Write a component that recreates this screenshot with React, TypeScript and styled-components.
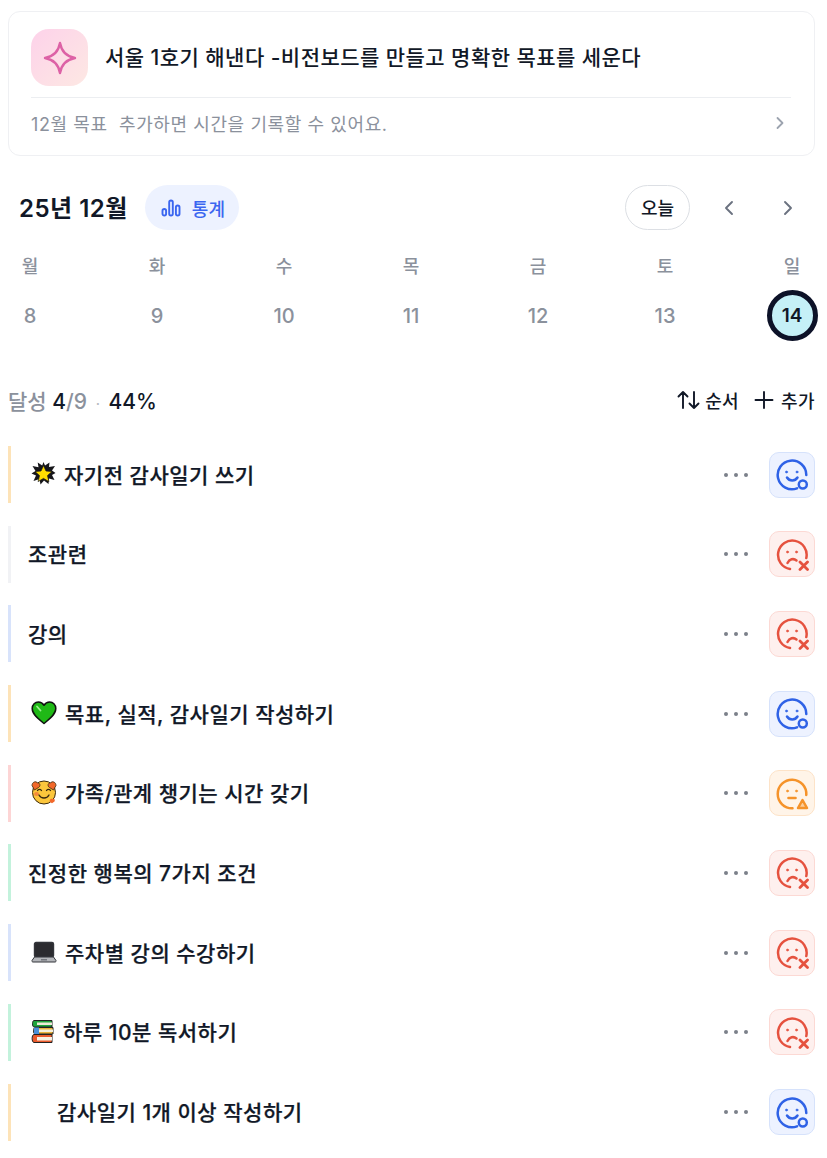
import React from 'react';
import styled, { createGlobalStyle } from 'styled-components';

type Status = 'good' | 'bad' | 'warn';

type Goal = {
  title: string;
  bar: string;
  status: Status;
  emoji?: React.ReactNode;
  indent?: boolean;
};

const GlobalStyle = createGlobalStyle`
  * {
    box-sizing: border-box;
  }
  body {
    margin: 0;
    background: #fff;
    font-family: Inter, "Noto Sans CJK KR", sans-serif;
    color: #111827;
  }
`;

function CollisionEmoji() {
  return (
    <svg width="25" height="25" viewBox="0 0 25 25">
      <path d="M12.500 1l1.500 3.500L18.500 1.500l-.5 4.500 6-1-3 4.500 3.500 2.500-3.500 2 2.500 5-5.500-1.500-.5 5.500-4.500-3.500-3.500 4-1-5.500-6 2 2.500-5.500L.5 12.500l4-2.500-3-5 6 1.200-.8-4.700 4.500 3z" fill="#16161a" />
      <path d="M12.500 4.500l2.500 5.500 6 .6-4.500 4 1.400 6-5.400-3.200-5.400 3.200 1.400-6-4.500-4 6-.6z" fill="#ffdd00" stroke="#16161a" strokeWidth="0.700" strokeLinejoin="round" />
    </svg>
  );
}

function HeartEmoji() {
  return (
    <svg width="26" height="24" viewBox="0 0 26 24">
      <path d="M13 22.500C8 18.500 1.200 13.500 1.200 7.500 1.200 3.500 4.200 1 7.300 1 9.800 1 11.800 2.300 13 4.300 14.200 2.300 16.200 1 18.700 1 21.800 1 24.800 3.500 24.800 7.500 24.800 13.500 18 18.500 13 22.500z" fill="#1fb916" stroke="#111" strokeWidth="1.500" strokeLinejoin="round" />
      <path d="M6 5.500l3.500 4" stroke="#9ef08f" strokeWidth="1.800" strokeLinecap="round" />
    </svg>
  );
}

function HeartsFaceEmoji() {
  return (
    <svg width="26" height="26" viewBox="0 0 26 26">
      <circle cx="13" cy="13.500" r="11.500" fill="#fbc63c" stroke="#3a2a10" strokeWidth="1" />
      <path d="M1 6.500c0-3.500 4-5 5.500-2.500 2.500-.5 3.500 3 1 4.500L3.500 11z" fill="#f2682a" stroke="#3a2a10" strokeWidth="0.800" />
      <path d="M25 6.500c0-3.500-4-5-5.500-2.500-2.500-.5-3.500 3-1 4.500l4 2.500z" fill="#f2682a" stroke="#3a2a10" strokeWidth="0.800" />
      <path d="M19 23c-1-2.500 1-4 2.500-3 1.500-1 3 .5 2 2.500l-2.500 1.800z" fill="#f2682a" />
      <ellipse cx="5.500" cy="15" rx="2.500" ry="2" fill="#f58a3c" />
      <path d="M6.500 11.500c1-1.500 3-1.500 4 0M15.500 11.500c1-1.500 3-1.500 4 0" fill="none" stroke="#3a2a10" strokeWidth="1.300" strokeLinecap="round" />
      <path d="M8 16c2 4 8 4 10 0" fill="none" stroke="#3a2a10" strokeWidth="1.300" strokeLinecap="round" />
    </svg>
  );
}

function LaptopEmoji() {
  return (
    <svg width="26" height="22" viewBox="0 0 26 22">
      <rect x="3.500" y="1.500" width="19" height="14.500" rx="1.500" fill="#2b2b2f" stroke="#33353a" strokeWidth="1.400" />
      <path d="M3.500 16h19l2.500 3.500c.3.800-.2 1.500-1 1.500H2c-.8 0-1.300-.7-1-1.500z" fill="#b4b6ba" stroke="#33353a" strokeWidth="1" />
      <rect x="10" y="18" width="6" height="1.500" fill="#74777d" />
    </svg>
  );
}

function BooksEmoji() {
  return (
    <svg width="24" height="25" viewBox="0 0 24 25">
      <path d="M3 1.500h18v6.500H3C1 8 1 1.500 3 1.500z" fill="#1fa53c" stroke="#222" strokeWidth="1" />
      <rect x="6" y="3.500" width="15" height="2.500" fill="#efe9d8" />
      <path d="M4 8.500h18v6.500H4c-2 0-2-6.500 0-6.500z" fill="#e8b23a" stroke="#222" strokeWidth="1" />
      <rect x="7" y="10.500" width="15" height="2.500" fill="#f6efdc" />
      <path d="M3 8.500h5v6.500H3z" fill="#4a90d9" />
      <path d="M3 15.500h18v8H3c-2.500 0-2.500-8 0-8z" fill="#ea5a2c" stroke="#222" strokeWidth="1" />
      <rect x="6" y="18" width="15" height="3.500" fill="#f7f1e3" />
    </svg>
  );
}

function StatusFace({ status }: { status: Status }) {
  return (
    <svg width="33" height="33" viewBox="0 0 33 33" fill="none" stroke="currentColor" strokeWidth="2.500" strokeLinecap="round" strokeLinejoin="round">
      {status === 'good' && <path d="M21 30.300A14.300 14.300 0 1 1 30.300 17" />}
      {status === 'bad' && <path d="M14 31A14.300 14.300 0 1 1 30.300 20" />}
      {status === 'warn' && <path d="M16.500 31.300A14.300 14.300 0 1 1 30.300 18" />}
      <circle cx={status === 'good' ? 10.500 : 11.500} cy="14" r="1.100" fill="currentColor" strokeWidth="0.500" />
      <circle cx={status === 'good' ? 21 : 20.500} cy="14" r="1.100" fill="currentColor" strokeWidth="0.500" />
      {status === 'good' && (
        <>
          <path d="M11 19.500c2.500 4 8 4 10.500 0" />
          <circle cx="26.800" cy="26.500" r="4" />
        </>
      )}
      {status === 'bad' && (
        <>
          <path d="M11.500 25c2-4 6-5 9-2.500" />
          <path d="M24 24l7.500 7.500M31.500 24L24 31.500" strokeWidth="2.800" />
        </>
      )}
      {status === 'warn' && (
        <>
          <path d="M12.500 21h7" strokeWidth="2.600" />
          <path d="M26.500 23l4.500 8h-9z" strokeWidth="2.500" fill="currentColor" fillOpacity="0.400" />
        </>
      )}
    </svg>
  );
}

const days = [
  { label: '월', date: 8 },
  { label: '화', date: 9 },
  { label: '수', date: 10 },
  { label: '목', date: 11 },
  { label: '금', date: 12 },
  { label: '토', date: 13 },
  { label: '일', date: 14, today: true },
];

const goals: Goal[] = [
  { title: '자기전 감사일기 쓰기', bar: '#fde3b8', status: 'good', emoji: <CollisionEmoji /> },
  { title: '조관련', bar: '#f1f2f5', status: 'bad' },
  { title: '강의', bar: '#d8e3fb', status: 'bad' },
  { title: '목표, 실적, 감사일기 작성하기', bar: '#fde3b8', status: 'good', emoji: <HeartEmoji /> },
  { title: '가족/관계 챙기는 시간 갖기', bar: '#fdd5d5', status: 'warn', emoji: <HeartsFaceEmoji /> },
  { title: '진정한 행복의 7가지 조건', bar: '#c3f2dc', status: 'bad' },
  { title: '주차별 강의 수강하기', bar: '#d8e3fb', status: 'bad', emoji: <LaptopEmoji /> },
  { title: '하루 10분 독서하기', bar: '#c3f2dc', status: 'bad', emoji: <BooksEmoji /> },
  { title: '감사일기 1개 이상 작성하기', bar: '#fde3b8', status: 'good', indent: true },
];

function App() {
  return (
    <Page>
      <GlobalStyle />
      <GoalCard>
        <GoalTop>
          <SparkBox>
            <svg width="36" height="36" viewBox="0 0 36 36" fill="none">
              <path
                d="M18 3c1.500 8.500 6.500 13.500 15 15-8.500 1.500-13.500 6.500-15 15C16.500 24.500 11.500 19.500 3 18 11.500 16.500 16.500 11.500 18 3z"
                stroke="#dd62a6"
                strokeWidth="2.400"
                strokeLinejoin="round"
              />
            </svg>
          </SparkBox>
          <GoalTitle>서울 1호기 해낸다 -비전보드를 만들고 명확한 목표를 세운다</GoalTitle>
        </GoalTop>
        <GoalFooter>
          <GoalHint>12월 목표&nbsp; 추가하면 시간을 기록할 수 있어요.</GoalHint>
          <svg width="20" height="20" viewBox="0 0 20 20" fill="none" stroke="#9ca3af" strokeWidth="1.800" strokeLinecap="round" strokeLinejoin="round">
            <path d="M7.500 5l5 5-5 5" />
          </svg>
        </GoalFooter>
      </GoalCard>

      <CalendarHeader>
        <MonthGroup>
          <MonthTitle>25년 12월</MonthTitle>
          <StatsButton>
            <svg width="20" height="20" viewBox="0 0 20 20" fill="none" stroke="#3b66f0" strokeWidth="1.900">
              <rect x="1.500" y="11" width="3.600" height="6.500" rx="1.800" />
              <rect x="8.200" y="2.500" width="3.600" height="15" rx="1.800" />
              <rect x="14.900" y="7.500" width="3.600" height="10" rx="1.800" />
            </svg>
            통계
          </StatsButton>
        </MonthGroup>
        <NavGroup>
          <TodayButton>오늘</TodayButton>
          <NavButton>
            <svg width="22" height="22" viewBox="0 0 22 22" fill="none" stroke="#6b7280" strokeWidth="1.900" strokeLinecap="round" strokeLinejoin="round">
              <path d="M14 5l-6 6 6 6" />
            </svg>
          </NavButton>
          <NavButton>
            <svg width="22" height="22" viewBox="0 0 22 22" fill="none" stroke="#6b7280" strokeWidth="1.900" strokeLinecap="round" strokeLinejoin="round">
              <path d="M8 5l6 6-6 6" />
            </svg>
          </NavButton>
        </NavGroup>
      </CalendarHeader>

      <Week>
        {days.map((d) => (
          <DayColumn key={d.label}>
            <DayLabel>{d.label}</DayLabel>
            <DayDate $today={d.today}>{d.date}</DayDate>
          </DayColumn>
        ))}
      </Week>

      <SummaryRow>
        <Summary>
          <SummaryMuted>달성</SummaryMuted> 4<SummaryMuted>/9</SummaryMuted> <SummaryDot>·</SummaryDot> 44%
        </Summary>
        <Actions>
          <ActionButton>
            <svg width="23" height="22" viewBox="0 0 23 22" fill="none" stroke="#111827" strokeWidth="1.900" strokeLinecap="round" strokeLinejoin="round">
              <path d="M6 19V3M1.500 7.500L6 3l4.500 4.500M17 3v16M12.500 14.500L17 19l4.500-4.500" />
            </svg>
            순서
          </ActionButton>
          <ActionButton $gap={7}>
            <svg width="20" height="22" viewBox="0 0 20 22" fill="none" stroke="#111827" strokeWidth="1.900" strokeLinecap="round">
              <path d="M10 3v16M1.500 11h17" />
            </svg>
            추가
          </ActionButton>
        </Actions>
      </SummaryRow>

      <GoalList>
        {goals.map((g) => (
          <GoalRow key={g.title} $bar={g.bar}>
            <GoalLabel $indent={g.indent}>
              {g.emoji && <EmojiSlot>{g.emoji}</EmojiSlot>}
              {g.title}
            </GoalLabel>
            <MoreDots>
              <Dot />
              <Dot />
              <Dot />
            </MoreDots>
            <StatusBox $status={g.status}>
              <StatusFace status={g.status} />
            </StatusBox>
          </GoalRow>
        ))}
      </GoalList>
    </Page>
  );
}

const Page = styled.div`
  width: 827px;
  height: 1158px;
  padding: 11px 12px 0 8px;
  overflow: hidden;
  background: #fff;
`;

const GoalCard = styled.section`
  height: 145px;
  padding: 17px 22px 0;
  border: 1px solid #eff0f3;
  border-radius: 12px;
`;

const GoalTop = styled.div`
  display: flex;
  align-items: center;
  gap: 17px;
  height: 69px;
  margin-right: 1px;
  padding-bottom: 11px;
  border-bottom: 1px solid #eceef1;
`;

const SparkBox = styled.div`
  display: flex;
  align-items: center;
  justify-content: center;
  width: 57px;
  height: 57px;
  border-radius: 18px;
  background: linear-gradient(135deg, #fdd2ea, #fde8e3);
`;

const GoalTitle = styled.div`
  padding-bottom: 3px;
  font-size: 21px;
  font-weight: 500;
  letter-spacing: 0.45px;
  color: #111827;
`;

const GoalFooter = styled.div`
  display: flex;
  align-items: center;
  justify-content: space-between;
  height: 50px;
  padding-right: 2px;
`;

const GoalHint = styled.div`
  font-size: 18px;
  letter-spacing: 0.6px;
  color: #8b919c;
`;

const CalendarHeader = styled.div`
  display: flex;
  align-items: center;
  justify-content: space-between;
  height: 45px;
  margin-top: 29px;
  padding-left: 11px;
`;

const MonthGroup = styled.div`
  display: flex;
  align-items: center;
  gap: 17px;
`;

const MonthTitle = styled.h2`
  margin: 0;
  padding-bottom: 2px;
  font-size: 24px;
  font-weight: 600;
  letter-spacing: 0.5px;
  color: #111827;
`;

const StatsButton = styled.button`
  display: flex;
  align-items: center;
  gap: 11px;
  height: 45px;
  padding: 0 14px 0 16px;
  border: 0;
  border-radius: 23px;
  background: #edf2ff;
  color: #3b66f0;
  font: 500 18px Inter, "Noto Sans CJK KR", sans-serif;
`;

const NavGroup = styled.div`
  display: flex;
  align-items: center;
  padding-right: 4px;
`;

const TodayButton = styled.button`
  width: 65px;
  height: 45px;
  margin-right: 16px;
  padding: 0 0 2px;
  border: 1px solid #dcdfe4;
  border-radius: 23px;
  background: #fff;
  color: #111827;
  font: 500 18px Inter, "Noto Sans CJK KR", sans-serif;
`;

const NavButton = styled.button`
  display: flex;
  align-items: center;
  justify-content: center;
  width: 46px;
  height: 45px;
  padding: 0;
  border: 0;
  background: none;

  & + & {
    margin-left: 13px;
  }
`;

const Week = styled.div`
  display: flex;
  justify-content: space-between;
  margin: 25px 0 0 -1px;
`;

const DayColumn = styled.div`
  display: flex;
  flex-direction: column;
  align-items: center;
  width: 46px;
`;

const DayLabel = styled.div`
  height: 24px;
  font-size: 18px;
  line-height: 24px;
  font-weight: 500;
  color: #8b919c;
`;

const DayDate = styled.div<{ $today?: boolean }>`
  display: flex;
  align-items: center;
  justify-content: center;
  flex: none;
  width: 51px;
  height: 51px;
  margin-top: 11px;
  border-radius: 50%;
  font-size: ${(p) => (p.$today ? '19px' : '20px')};
  font-weight: ${(p) => (p.$today ? 600 : 500)};
  color: ${(p) => (p.$today ? '#111827' : '#8b919c')};
  background: ${(p) => (p.$today ? '#c5f0f7' : 'transparent')};
  border: ${(p) => (p.$today ? '5px solid #0d1228' : '0')};
`;

const SummaryRow = styled.div`
  display: flex;
  align-items: center;
  justify-content: space-between;
  height: 26px;
  margin-top: 46px;
`;

const Summary = styled.div`
  font-size: 21px;
  font-weight: 500;
  color: #111827;
`;

const SummaryMuted = styled.span`
  color: #8b919c;
`;

const SummaryDot = styled.span`
  color: #b5b9c1;
  font-size: 14px;
  padding: 0 3px;
`;

const Actions = styled.div`
  display: flex;
  align-items: center;
  gap: 15px;
`;

const ActionButton = styled.button<{ $gap?: number }>`
  display: flex;
  align-items: center;
  gap: ${(p) => p.$gap ?? 5}px;
  padding: 0;
  border: 0;
  background: none;
  color: #111827;
  font: 500 18px Inter, "Noto Sans CJK KR", sans-serif;
  letter-spacing: 0.4px;
`;

const GoalList = styled.div`
  display: flex;
  flex-direction: column;
  gap: 22.7px;
  margin-top: 33px;
`;

const GoalRow = styled.div<{ $bar: string }>`
  display: flex;
  align-items: center;
  height: 57px;
  padding-left: 17px;
  border-left: 3px solid ${(p) => p.$bar};
`;

const GoalLabel = styled.div<{ $indent?: boolean }>`
  display: flex;
  align-items: center;
  flex: 1;
  gap: 8px;
  padding-bottom: 2px;
  padding-left: ${(p) => (p.$indent ? '29px' : '0')};
  font-size: 21px;
  font-weight: 500;
  letter-spacing: 0.5px;
  color: #111827;
  -webkit-text-stroke: 0.25px #111827;
`;

const EmojiSlot = styled.span`
  display: flex;
  align-items: center;
  padding-left: 3px;
`;

const MoreDots = styled.div`
  display: flex;
  gap: 6px;
  margin-right: 21px;
`;

const Dot = styled.span`
  width: 4px;
  height: 4px;
  border-radius: 50%;
  background: #7b808a;
`;

const statusColors: Record<Status, { fg: string; bg: string; line: string }> = {
  good: { fg: '#2f62e6', bg: '#edf2ff', line: '#d6e2fb' },
  bad: { fg: '#e5523f', bg: '#fef0ee', line: '#fcd9d4' },
  warn: { fg: '#f5932a', bg: '#fff4e8', line: '#fde3c8' },
};

const StatusBox = styled.div<{ $status: Status }>`
  display: flex;
  align-items: center;
  justify-content: center;
  width: 46px;
  height: 46px;
  border-radius: 10px;
  color: ${(p) => statusColors[p.$status].fg};
  background: ${(p) => statusColors[p.$status].bg};
  border: 1px solid ${(p) => statusColors[p.$status].line};
`;

export default App;
